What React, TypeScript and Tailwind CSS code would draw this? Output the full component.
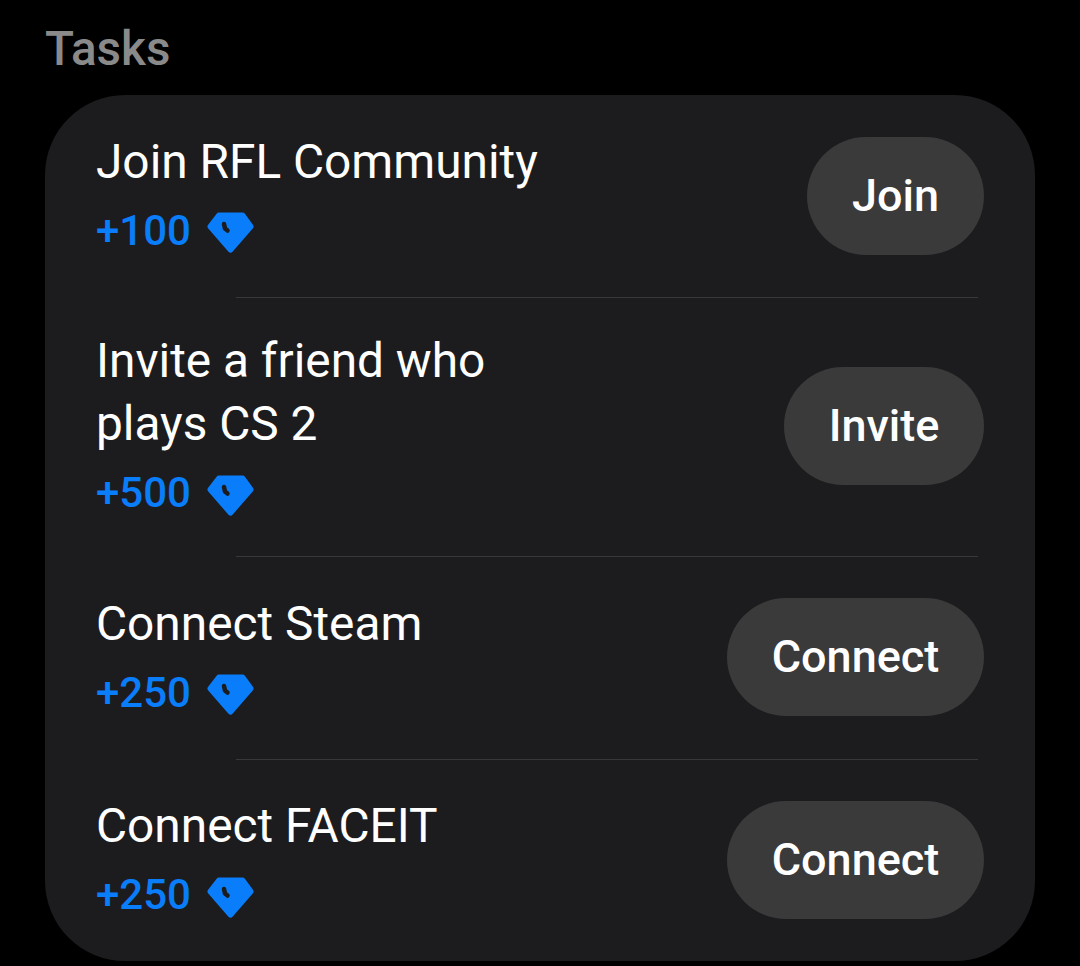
const tasks = [
  { title: ['Join RFL Community'], reward: 100, action: 'Join', button: 'mt-[42px] mb-[42px] w-[177px]' },
  { title: ['Invite a friend who', 'plays CS 2'], reward: 500, action: 'Invite', button: 'mt-[41px] mb-[43px] w-[200px]' },
  { title: ['Connect Steam'], reward: 250, action: 'Connect', button: 'mt-[41px] mb-[43px] w-[257px]' },
  { title: ['Connect FACEIT'], reward: 250, action: 'Connect', button: 'mt-[41px] mb-[42px] w-[257px]' },
]

function Gem() {
  return (
    <svg width="48" height="41" viewBox="0 0 48 41" className="mt-[4px] shrink-0">
      <path
        d="M12 3.5H35.5L43.5 14.5L23.5 37.5L3.5 14.5Z"
        fill="#0a7dfa"
        stroke="#0a7dfa"
        strokeWidth="6"
        strokeLinejoin="round"
      />
      <path d="M17 12L18 16.5L20.5 18.5" fill="none" stroke="#1c1c1e" strokeWidth="4.5" strokeLinecap="round" />
    </svg>
  )
}

export default function App() {
  return (
    <div className="h-[966px] w-[1080px] overflow-hidden bg-black pl-[45px] pr-[45px] pt-[21px] font-['Roboto',sans-serif]">
      <h2 className="h-[74px] text-[47.6px] leading-[56px] font-medium text-[#8a8a8a]">Tasks</h2>
      <div className="rounded-[80px] bg-[#1c1c1e] pl-[51px] pr-[51px]">
        {tasks.map((task, i) => (
          <div key={i}>
            {i > 0 && <div className="ml-[140px] mr-[6px] h-px bg-[#38383a]" />}
            <div className="flex items-center justify-between">
              <div className="py-[31px]">
                <div className="pb-2">
                  <div className="pt-px text-[47.8px] leading-[63px] text-white">
                    {task.title.map((line) => (
                      <div key={line}>{line}</div>
                    ))}
                  </div>
                  <div className="mt-[13px] flex h-[48px] items-center gap-[16px]">
                    <span className="text-[42px] leading-[48px] font-medium text-[#0a7dfa]">+{task.reward}</span>
                    <Gem />
                  </div>
                </div>
              </div>
              <button className={`h-[118px] shrink-0 rounded-full bg-[#3a3a3a] text-[45px] font-medium text-white ${task.button}`}>
                {task.action}
              </button>
            </div>
          </div>
        ))}
      </div>
    </div>
  )
}
